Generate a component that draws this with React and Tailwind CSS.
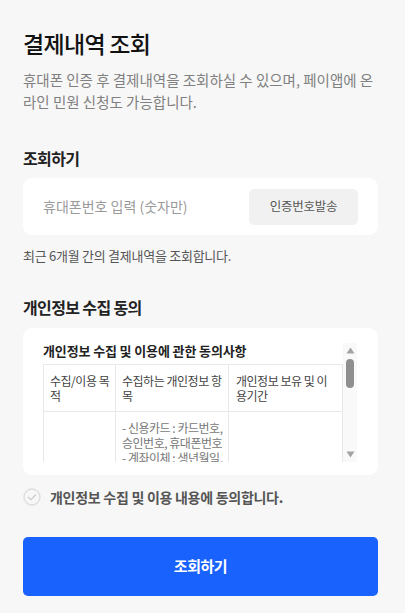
import React, { useState } from "react";

const FONT = { fontFamily: '"Noto Sans CJK KR", "Noto Sans", sans-serif' };

const ConsentTable = () => (
  <table className="w-full table-fixed border-collapse text-[12px] leading-[15px] tracking-[-0.04em]">
    <colgroup>
      <col className="w-[72px]" />
      <col className="w-[113px]" />
      <col />
    </colgroup>
    <thead>
      <tr className="text-[#444]">
        <th className="border border-[#e8e8e8] px-[6px] py-[8px] text-left align-top font-normal whitespace-nowrap">
          수집/이용 목<br />적
        </th>
        <th className="border border-[#e8e8e8] px-[6px] py-[8px] text-left align-top font-normal whitespace-nowrap">
          수집하는 개인정보 항<br />목
        </th>
        <th className="border border-[#e8e8e8] px-[7px] py-[8px] text-left align-top font-normal whitespace-nowrap">
          개인정보 보유 및 이<br />용기간
        </th>
      </tr>
    </thead>
    <tbody>
      <tr className="text-[#777]">
        <td className="border border-[#e8e8e8] px-[6px] py-[8px]" />
        <td className="border border-[#e8e8e8] px-[6px] py-[8px] align-top whitespace-nowrap">
          - 신용카드 : 카드번호,<br />
          승인번호, 휴대폰번호<br />
          - 계좌이체 : 생년월일,<br />
          은행명, 휴대폰번호
        </td>
        <td className="border border-[#e8e8e8] px-[7px] py-[8px]" />
      </tr>
    </tbody>
  </table>
);

const FakeScrollbar = () => (
  <div className="flex w-[14px] shrink-0 flex-col items-center bg-[#f9f9f9] py-[4px]">
    <svg width="9" height="7" viewBox="0 0 9 7">
      <path d="M4.5 0.5 L8.5 6.5 L0.5 6.5 Z" fill="#a3a3a3" />
    </svg>
    <div className="mt-[5px] h-[29px] w-[8px] rounded-full bg-[#8f8f8f]" />
    <div className="flex-1" />
    <svg width="9" height="7" viewBox="0 0 9 7">
      <path d="M0.5 0.5 L8.5 0.5 L4.5 6.5 Z" fill="#a3a3a3" />
    </svg>
  </div>
);

const CheckCircle = ({ checked }) => (
  <svg width="18" height="18" viewBox="0 0 18 18">
    <circle
      cx="9"
      cy="9"
      r="8"
      fill={checked ? "#1a62fe" : "none"}
      stroke={checked ? "#1a62fe" : "#dcdcdc"}
      strokeWidth="1.3"
    />
    <path
      d="M5.3 9.2 L8 11.8 L12.6 6.8"
      fill="none"
      stroke={checked ? "#fff" : "#cfcfcf"}
      strokeWidth="1.3"
      strokeLinecap="round"
      strokeLinejoin="round"
    />
  </svg>
);

export default function App() {
  const [phone, setPhone] = useState("");
  const [agree, setAgree] = useState(false);

  return (
    <div style={FONT} className="min-h-screen bg-[#f7f7f7] pl-[23px] pr-[27px] pt-[28px] pb-[17px]">
      <h1 className="text-[23px] leading-[30px] font-medium tracking-[-0.03em] text-[#111]">
        결제내역 조회
      </h1>
      <p className="mt-[11px] text-[14.5px] leading-[22px] text-[#808080]">
        휴대폰 인증 후 결제내역을 조회하실 수 있으며, 페이앱에 온라인 민원 신청도 가능합니다.
      </p>

      <h2 className="mt-[33px] text-[16px] leading-[24px] font-semibold tracking-[-0.04em] text-[#222]">
        조회하기
      </h2>
      <div className="mt-[8px] flex h-[57px] items-center rounded-[9px] bg-white pl-[20px] pr-[20px]">
        <input
          type="tel"
          value={phone}
          onChange={(e) => setPhone(e.target.value.replace(/[^0-9]/g, ""))}
          placeholder="휴대폰번호 입력 (숫자만)"
          className="min-w-0 flex-1 bg-transparent text-[14px] text-[#333] outline-none placeholder:text-[#9a9a9a]"
        />
        <button
          type="button"
          className="h-[36px] w-[109px] shrink-0 rounded-[5px] bg-[#f1f1f1] text-[12.5px] tracking-[-0.02em] text-[#555]"
        >
          인증번호발송
        </button>
      </div>
      <p className="mt-[12px] text-[13px] leading-[18px] tracking-[-0.02em] text-[#555]">
        최근 6개월 간의 결제내역을 조회합니다.
      </p>

      <h2 className="mt-[30px] text-[16px] leading-[24px] font-semibold tracking-[-0.04em] text-[#222]">
        개인정보 수집 동의
      </h2>
      <div className="mt-[9px] rounded-[9px] bg-white pt-[15px] pb-[13px] pl-[20px] pr-[21px]">
        <div className="flex h-[119px]">
          <div className="min-w-0 flex-1 overflow-hidden">
            <p className="text-[13px] leading-[16px] font-bold tracking-[-0.01em] text-[#222]">
              개인정보 수집 및 이용에 관한 동의사항
            </p>
            <div className="mt-[5px]">
              <ConsentTable />
            </div>
          </div>
          <FakeScrollbar />
        </div>
      </div>

      <label className="mt-[12px] flex h-[20px] cursor-pointer items-center gap-[9px]">
        <input
          type="checkbox"
          className="hidden"
          checked={agree}
          onChange={() => setAgree(!agree)}
        />
        <CheckCircle checked={agree} />
        <span className="text-[14px] font-semibold tracking-[-0.02em] text-[#555]">
          개인정보 수집 및 이용 내용에 동의합니다.
        </span>
      </label>

      <button
        type="button"
        className="mt-[30px] h-[59px] w-full rounded-[5px] bg-[#1a62fe] text-[15px] font-bold tracking-[-0.03em] text-white"
      >
        조회하기
      </button>
    </div>
  );
}
